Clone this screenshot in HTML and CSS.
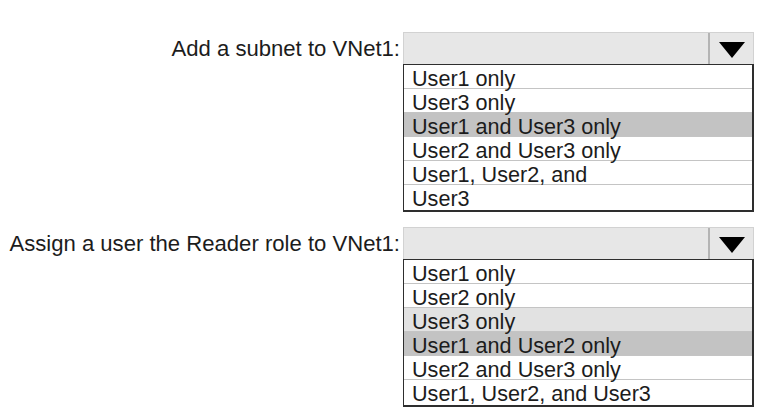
FILE: index.html
```html
<!DOCTYPE html>
<html lang="en">
<head>
    <meta charset="UTF-8">
    <meta name="viewport" content="width=device-width, initial-scale=1.0">
    <title>VNet1 permissions</title>
    <link rel="stylesheet" href="styles.css">
</head>
<body>
    <div class="answer-area">
        <div class="field">
            <div class="field-label">Add a subnet to VNet1:</div>
            <div class="dropdown">
                <div class="select-box">
                    <span class="select-value"></span>
                    <span class="select-arrow"><span class="triangle"></span></span>
                </div>
                <ul class="options">
                    <li>User1 only</li>
                    <li>User3 only</li>
                    <li class="selected">User1 and User3 only</li>
                    <li>User2 and User3 only</li>
                    <li>User1, User2, and</li>
                    <li>User3</li>
                </ul>
            </div>
        </div>
        <div class="field">
            <div class="field-label">Assign a user the Reader role to VNet1:</div>
            <div class="dropdown">
                <div class="select-box">
                    <span class="select-value"></span>
                    <span class="select-arrow"><span class="triangle"></span></span>
                </div>
                <ul class="options">
                    <li>User1 only</li>
                    <li>User2 only</li>
                    <li class="hover">User3 only</li>
                    <li class="selected">User1 and User2 only</li>
                    <li>User2 and User3 only</li>
                    <li>User1, User2, and User3</li>
                </ul>
            </div>
        </div>
    </div>
</body>
</html>
```

FILE: styles.css
```css
:root { --text-color: #1c1c1c; --row-line: #c4c4c4; }
body { margin: 0; background: #fff; font-family: "Liberation Sans", Arial, sans-serif; font-size: 21.6px; color: var(--text-color); }
.answer-area { padding-top: 32px; display: flex; flex-direction: column; gap: 15px; }
.field { display: grid; grid-template-columns: 403px 351px; align-items: start; }
.field-label { justify-self: end; padding-right: 3px; height: 32px; line-height: 34px; font-size: 22.1px; white-space: nowrap; }
.dropdown { display: flex; flex-direction: column; }
.select-box { display: flex; height: 32px; box-sizing: border-box; background: #e7e7e7; border: 1px solid #d2d2d2; border-bottom: none; }
.select-value { flex: 1; }
.select-arrow { width: 45px; border-left: 2px solid #b4b4b4; display: flex; justify-content: center; align-items: center; padding-top: 3px; box-sizing: border-box; }
.triangle { width: 0; height: 0; border-left: 13.5px solid transparent; border-right: 13.5px solid transparent; border-top: 16px solid #000; }
.options { list-style: none; margin: 0; padding: 0; border: 1px solid #2e2e2e; border-right-width: 2px; border-bottom-width: 2px; height: 148px; box-sizing: border-box; }
.options li { height: 24px; box-sizing: border-box; padding: 4px 0 0 8px; line-height: 20px; border-bottom: 1px solid var(--row-line); white-space: nowrap; }
.options li:last-child { border-bottom: none; }
.options li.selected { background: #c3c3c3; }
.options li.hover { background: #e2e2e2; }
```
